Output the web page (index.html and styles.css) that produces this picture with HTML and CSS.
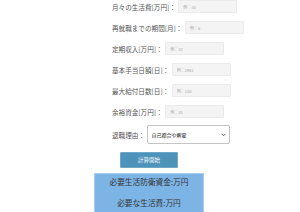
FILE: index.html
```html
<!DOCTYPE html>
<html lang="ja">
<head>
    <meta charset="UTF-8">
    <meta name="viewport" content="width=device-width, initial-scale=1.0">
    <title>生活防衛資金計算</title>
    <link rel="stylesheet" href="styles.css">
</head>
<body>

    <div class="form">
        <div class="row">
            <label>月々の生活費[万円]：</label>
            <input type="number" placeholder="例：30">
        </div>
        <div class="row">
            <label>再就職までの期間[月]：</label>
            <input type="number" placeholder="例：6">
        </div>
        <div class="row">
            <label>定期収入[万円]：</label>
            <input type="number" placeholder="例：10">
        </div>
        <div class="row">
            <label>基本手当日額[日]：</label>
            <input type="number" placeholder="例：2961">
        </div>
        <div class="row">
            <label>最大給付日数[日]：</label>
            <input type="number" placeholder="例：120">
        </div>
        <div class="row">
            <label>余裕資金[万円]：</label>
            <input type="number" placeholder="例：30">
        </div>
        <div class="row select-row">
            <label>退職理由：</label>
            <div class="select-wrap">
                <select>
                    <option>自己都合や解雇</option>
                    <option>会社都合</option>
                </select>
                <svg class="arrow" width="5" height="4" viewBox="0 0 5 4">
                    <path d="M0.6 0.8 L2.5 2.8 L4.4 0.8" fill="none" stroke="#555" stroke-width="0.9"/>
                </svg>
            </div>
        </div>
        <button class="calc">計算開始</button>
    </div>

    <div class="result">
        <p>必要生活防衛資金:万円</p>
        <p>必要な生活費:万円</p>
    </div>

</body>
</html>
```

FILE: styles.css
```css
html {
    -webkit-text-size-adjust: 100%;
    text-size-adjust: 100%;
}

body {
    font-family: "Noto Sans CJK JP", "Noto Sans", sans-serif;
    margin: 0;
    padding: 0;
    background-color: white;
    color: #555;
}

.form {
    margin-top: -4px;
    padding-left: 112px;
}

.row {
    display: flex;
    align-items: center;
    height: 21px;
}

.row label {
    font-size: 6.6px;
    margin-right: 2.5px;
    white-space: nowrap;
}

.row input {
    width: 59px;
    height: 13px;
    box-sizing: border-box;
    border: 1px solid #ebebeb;
    border-radius: 1px;
    background-color: #f4f4f4;
    padding: 0 0 0 4px;
    font-size: 4px;
    font-family: inherit;
}

.row input::placeholder {
    color: #a8a8a8;
}

.select-row {
    height: 19px;
    margin-top: 3px;
}

.select-wrap {
    position: relative;
    display: flex;
    height: 19px;
}

.select-wrap select {
    display: block;
    appearance: none;
    width: 83px;
    height: 19px;
    box-sizing: border-box;
    border: 1px solid #c4c4c4;
    border-radius: 2px;
    background-color: white;
    padding: 0 0 0 3px;
    font-size: 5px;
    line-height: 17px;
    font-family: inherit;
    color: #222;
}

.arrow {
    position: absolute;
    right: 4px;
    top: 8px;
}

.calc {
    display: block;
    margin: 8px 0 0 8px;
    width: 58px;
    height: 16px;
    padding: 0;
    border: 1px solid #6ea8c9;
    border-radius: 1px;
    background-color: #4e93b9;
    color: white;
    font-size: 5.5px;
    font-family: inherit;
}

.result {
    width: 110px;
    box-sizing: border-box;
    margin: 5px 0 0 94px;
    padding-top: 1px;
    height: 42px;
    background-color: #7db4e6;
    border: 1px solid #a8cdef;
    text-align: center;
    color: #333;
}

.result p {
    margin: 0;
    font-size: 7.7px;
    line-height: 10px;
    height: 21px;
    padding-top: 2px;
    box-sizing: border-box;
}
```
